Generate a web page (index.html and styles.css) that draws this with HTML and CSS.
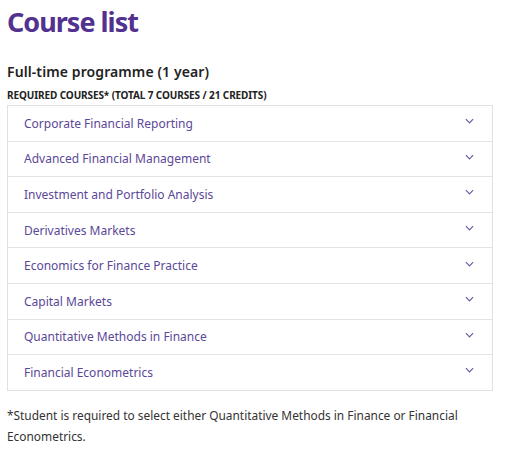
FILE: index.html
```html
<!DOCTYPE html>
<html>
<head>
<meta charset="utf-8">
<link rel="stylesheet" href="styles.css">
</head>
<body>
<div class="page">
  <h1 class="title">Course list</h1>
  <h2 class="subtitle">Full-time programme (1 year)</h2>
  <div class="label">REQUIRED COURSES* (TOTAL 7 COURSES / 21 CREDITS)</div>
  <ul class="accordion">
    <li class="row"><span>Corporate Financial Reporting</span><svg class="chev" viewBox="0 0 10 6" width="9" height="6"><path d="M1 1l4 4 4-4" fill="none" stroke="#6b5a9c" stroke-width="1.3"/></svg></li>
    <li class="row"><span>Advanced Financial Management</span><svg class="chev" viewBox="0 0 10 6" width="9" height="6"><path d="M1 1l4 4 4-4" fill="none" stroke="#6b5a9c" stroke-width="1.3"/></svg></li>
    <li class="row"><span>Investment and Portfolio Analysis</span><svg class="chev" viewBox="0 0 10 6" width="9" height="6"><path d="M1 1l4 4 4-4" fill="none" stroke="#6b5a9c" stroke-width="1.3"/></svg></li>
    <li class="row"><span>Derivatives Markets</span><svg class="chev" viewBox="0 0 10 6" width="9" height="6"><path d="M1 1l4 4 4-4" fill="none" stroke="#6b5a9c" stroke-width="1.3"/></svg></li>
    <li class="row"><span>Economics for Finance Practice</span><svg class="chev" viewBox="0 0 10 6" width="9" height="6"><path d="M1 1l4 4 4-4" fill="none" stroke="#6b5a9c" stroke-width="1.3"/></svg></li>
    <li class="row"><span>Capital Markets</span><svg class="chev" viewBox="0 0 10 6" width="9" height="6"><path d="M1 1l4 4 4-4" fill="none" stroke="#6b5a9c" stroke-width="1.3"/></svg></li>
    <li class="row"><span>Quantitative Methods in Finance</span><svg class="chev" viewBox="0 0 10 6" width="9" height="6"><path d="M1 1l4 4 4-4" fill="none" stroke="#6b5a9c" stroke-width="1.3"/></svg></li>
    <li class="row"><span>Financial Econometrics</span><svg class="chev" viewBox="0 0 10 6" width="9" height="6"><path d="M1 1l4 4 4-4" fill="none" stroke="#6b5a9c" stroke-width="1.3"/></svg></li>
  </ul>
  <p class="note">*Student is required to select either Quantitative Methods in Finance or Financial Econometrics.</p>
</div>
</body>
</html>
```

FILE: styles.css
```css
html, body {
  margin: 0;
  padding: 0;
  background: #ffffff;
}
body {
  font-family: "Noto Sans", "Open Sans", sans-serif;
  color: #333333;
}
.page {
  padding: 0 19px 0 7px;
}
.title {
  margin: 0;
  padding-top: 3px;
  font-size: 27px;
  line-height: 38px;
  font-weight: 700;
  color: #52318f;
  letter-spacing: -1px;
}
.subtitle {
  margin: 21px 0 0 0;
  font-size: 14px;
  line-height: 20px;
  font-weight: 600;
  color: #222222;
  letter-spacing: 0.1px;
}
.label {
  margin-top: 7px;
  font-size: 10px;
  line-height: 13px;
  font-weight: 700;
  color: #222222;
  letter-spacing: -0.1px;
}
.accordion {
  list-style: none;
  margin: 3px 0 0 0;
  padding: 0;
  border: 1px solid #e1e1e1;
}
.row {
  display: flex;
  align-items: center;
  justify-content: space-between;
  height: 35.6px;
  box-sizing: border-box;
  padding: 0 18px 0 16px;
  border-top: 1px solid #e4e4e4;
  font-size: 12px;
  color: #5b4898;
}
.row:first-child {
  border-top: none;
  height: 34.6px;
}
.chev {
  display: block;
  margin-top: -4px;
}
.note {
  margin: 14px 0 0 0;
  font-size: 11.9px;
  line-height: 21px;
  color: #333333;
}
```
